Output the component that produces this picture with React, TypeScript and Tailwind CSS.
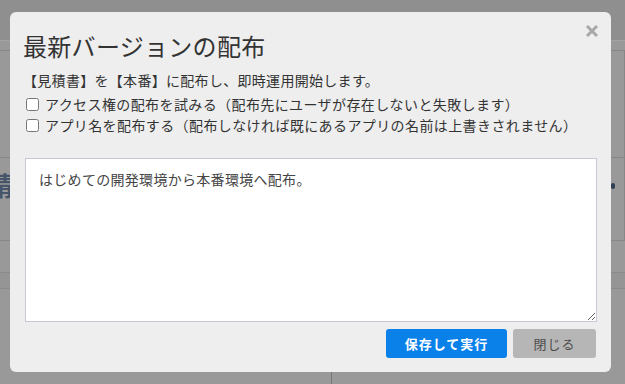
import React from "react";

const font = { fontFamily: '"Noto Sans CJK JP", "Noto Sans", sans-serif' };

function CheckRow({ label }: { label: string }) {
  return (
    <label className="flex items-center h-[21px] text-[14px] text-[#333] tracking-[0.4px]">
      <input type="checkbox" className="w-[13px] h-[13px] m-0 ml-[1px] mr-[6px] shrink-0" />
      <span className="whitespace-nowrap">{label}</span>
    </label>
  );
}

export default function App() {
  return (
    <div className="relative w-[625px] h-[384px] overflow-hidden bg-[#999999]" style={font}>
      {/* background page (dimmed) */}
      <div className="flex flex-col w-full h-full">
        <div className="h-[40px] bg-[#8f8f8f]" />
        <div className="h-[1px] bg-[#a2a2a2]" />
        <div className="h-[9px] bg-[#999999]" />
        <div className="h-[1px] bg-[#878787]" />
        <div className="flex flex-col border-r border-[#878787] w-full">
          <div className="h-[106px]" />
          <div className="h-[1px] bg-[#878787]" />
          <div className="h-[82px] flex items-start justify-between pt-[14px]">
            <span className="text-[26px] font-bold text-[#46556a] -ml-[13px] leading-none">請</span>
            <span className="w-[4px] h-[6px] mt-[11px] rounded-full bg-[#2f4052] mr-[9px]" />
          </div>
        </div>
        <div className="h-[1px] bg-[#878787]" />
        <div className="h-[31px]" />
        <div className="h-[1px] bg-[#8a8a8a]" />
        <div className="h-[15px] bg-[#959595]" />
        <div className="h-[1px] bg-[#8a8a8a]" />
        <div className="flex-1 flex">
          <div className="w-[332px] border-r border-[#777]" />
        </div>
      </div>

      {/* modal */}
      <div className="absolute left-[10px] top-[12px] w-[601px] h-[360px] rounded-[6px] bg-[#eeeeee] pl-[15px] pr-[14px] pt-[18px] pb-[14px] flex flex-col">
        <button className="absolute right-[12px] top-[12px] w-[14px] h-[14px]" aria-label="close">
          <svg viewBox="0 0 14 14" width="14" height="14">
            <path d="M2 2 L12 12 M12 2 L2 12" stroke="#a8a8a8" strokeWidth="3" strokeLinecap="butt" />
          </svg>
        </button>
        <h1 className="h-[32px] leading-[32px] text-[24px] text-[#333] font-normal -ml-[2px] tracking-[0.3px]">最新バージョンの配布</h1>
        <p className="mt-[8px] h-[20px] leading-[20px] text-[14px] text-[#333] -ml-[2px] tracking-[0.3px]">【見積書】を【本番】に配布し、即時運用開始します。</p>
        <div className="mt-[4px] flex flex-col">
          <CheckRow label="アクセス権の配布を試みる（配布先にユーザが存在しないと失敗します）" />
          <CheckRow label="アプリ名を配布する（配布しなければ既にあるアプリの名前は上書きされません）" />
        </div>
        <textarea
          className="mt-[22px] h-[164px] w-full bg-white border border-[#c6cbd3] px-[13px] pt-[10px] pb-[12px] text-[14px] leading-[20px] text-[#444] tracking-[0.3px] resize-y outline-none"
          style={font}
          defaultValue="はじめての開発環境から本番環境へ配布。"
        />
        <div className="mt-[7px] flex justify-end gap-[6px] pr-[1px]">
          <button className="w-[121px] h-[29px] rounded-[3px] bg-[#0a80e9] text-white text-[13px] font-bold tracking-[1px]">保存して実行</button>
          <button className="w-[83px] h-[29px] rounded-[3px] bg-[#b6b6b6] text-[#4d4d4d] text-[13px] tracking-[1px]">閉じる</button>
        </div>
      </div>
    </div>
  );
}
